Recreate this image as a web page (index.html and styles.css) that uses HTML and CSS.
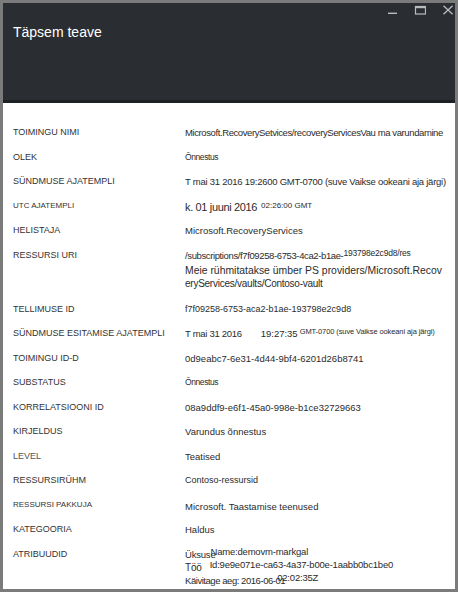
FILE: index.html
```html
<!DOCTYPE html>
<html lang="et">
<head>
<meta charset="utf-8">
<title>Täpsem teave</title>
<link rel="stylesheet" href="styles.css">
</head>
<body>
<div class="window">
  <header class="titlebar">
    <h1 class="title">Täpsem teave</h1>
    <div class="controls">
      <svg class="ctl ctl-min" width="10" height="12" viewBox="0 0 10 12"><rect x="1" y="8.6" width="9" height="1.4" fill="#b9bcbf"/></svg>
      <svg class="ctl ctl-max" width="12" height="12" viewBox="0 0 12 12"><rect x="1.5" y="2.5" width="10" height="7.5" fill="none" stroke="#b9bcbf" stroke-width="1.2"/><rect x="1" y="2" width="11" height="2.2" fill="#b9bcbf"/></svg>
      <svg class="ctl ctl-close" width="12" height="12" viewBox="0 0 12 12"><path d="M1.5 1.8 L10.6 10.2 M10.6 1.8 L1.5 10.2" stroke="#b9bcbf" stroke-width="1.3" fill="none"/></svg>
    </div>
  </header>
  <div class="details">
    <div class="row"><div class="label">TOIMINGU NIMI</div><div class="value ls-40">Microsoft.RecoverySetvices/recoveryServicesVau ma varundamine</div></div>
    <div class="row"><div class="label">OLEK</div><div class="value small-word">Õnnestus</div></div>
    <div class="row"><div class="label">SÜNDMUSE AJATEMPLI</div><div class="value ls-25">T mai 31 2016 19:2600 GMT-0700 (suve Vaikse ookeani aja järgi)</div></div>
    <div class="row"><div class="label label-small">UTC AJATEMPLI</div><div class="value value-low"><span class="big">k. 01 juuni 2016</span><span class="sup sup-utc">02:26:00 GMT</span></div></div>
    <div class="row"><div class="label">HELISTAJA</div><div class="value">Microsoft.RecoveryServices</div></div>
    <div class="row row-multi"><div class="label">RESSURSI URI</div><div class="value">
      <div class="line ls-38">/subscriptions/f7f09258-6753-4ca2-b1ae-<span class="sup sup-uri">193798e2c9d8/res</span></div>
      <div class="line line-lg">Meie rühmitatakse ümber PS providers/Microsoft.Recov</div>
      <div class="line line-md">eryServices/vaults/Contoso-vault</div>
    </div></div>
    <div class="row"><div class="label">TELLIMUSE ID</div><div class="value value-9">f7f09258-6753-aca2-b1ae-193798e2c9d8</div></div>
    <div class="row"><div class="label">SÜNDMUSE ESITAMISE AJATEMPLI</div><div class="value"><span class="ls-30">T mai 31 2016</span><span class="time">19:27:35</span><span class="sup sup-tz">GMT-0700 (suve Vaikse ookeani aja järgi)</span></div></div>
    <div class="row"><div class="label">TOIMINGU ID-D</div><div class="value">0d9eabc7-6e31-4d44-9bf4-6201d26b8741</div></div>
    <div class="row"><div class="label">SUBSTATUS</div><div class="value small-word">Õnnestus</div></div>
    <div class="row"><div class="label">KORRELATSIOONI ID</div><div class="value">08a9ddf9-e6f1-45a0-998e-b1ce32729663</div></div>
    <div class="row"><div class="label">KIRJELDUS</div><div class="value">Varundus õnnestus</div></div>
    <div class="row"><div class="label label-light">LEVEL</div><div class="value">Teatised</div></div>
    <div class="row"><div class="label">RESSURSIRÜHM</div><div class="value value-9">Contoso-ressursid</div></div>
    <div class="row"><div class="label label-small">RESSURSI PAKKUJA</div><div class="value value-low">Microsoft. Taastamise teenused</div></div>
    <div class="row"><div class="label">KATEGOORIA</div><div class="value">Haldus</div></div>
    <div class="row"><div class="label">ATRIBUUDID</div><div class="value attrs">
      <div class="line">Üksuse<span class="overlay ov-name">Name:demovm-markgal</span></div>
      <div class="line"><span class="job">Töö</span><span class="overlay ov-id">Id:9e9e071e-ca63-4a37-b00e-1aabb0bc1be0</span></div>
      <div class="line line-run">Käivitage aeg: 2016-06-01<span class="overlay ov-time">02:02:35Z</span></div>
    </div></div>
  </div>
</div>
</body>
</html>
```
FILE: styles.css
```css
* { box-sizing: border-box; }
html, body { margin: 0; padding: 0; }
body {
  font-family: "Liberation Sans", Arial, sans-serif;
  background: #7b7b7b;
}
.window {
  width: 458px;
  height: 592px;
  border: 3px solid #7b7b7b;
  background: #ffffff;
  display: flex;
  flex-direction: column;
  overflow: hidden;
}
.titlebar {
  height: 100px;
  background: #2a2e33;
  border-bottom: 3px solid #1d2024;
  display: flex;
  justify-content: space-between;
  align-items: flex-start;
  padding: 0 1px 0 10px;
  flex: none;
}
.title {
  margin: 21px 0 0 0;
  font-size: 14px;
  line-height: 16px;
  font-weight: normal;
  color: #ffffff;
}
.controls {
  display: flex;
  align-items: flex-start;
  margin-top: 1px;
}
.ctl { display: block; }
.ctl-max { margin-left: 17px; }
.ctl-close { margin-left: 16px; }

.details {
  flex: 1;
  display: flex;
  flex-direction: column;
  gap: 11.5px;
  padding: 23px 10px 0 10px;
  color: #2e2e2e;
}
.row {
  display: grid;
  grid-template-columns: 172px 1fr;
  line-height: 13px;
  white-space: nowrap;
}
.row-multi { margin-bottom: 1.5px; }
.label {
  font-size: 9px;
  color: #333333;
  height: 13px;
}
.label-small { font-size: 8px; position: relative; top: -1px; }
.label-light { color: #555555; }
.value {
  font-size: 9.5px;
  color: #2b2b2b;
}
.value-9 { font-size: 9px; }
.value-low { position: relative; top: 1px; }
.small-word { font-size: 8.5px; letter-spacing: -0.4px; }
.ls-40 { letter-spacing: -0.4px; }
.ls-38 { letter-spacing: -0.38px; }
.ls-30 { letter-spacing: -0.3px; }
.ls-25 { letter-spacing: -0.25px; }

.big { font-size: 11px; letter-spacing: -0.35px; line-height: 0; }
.sup { vertical-align: 3px; line-height: 0; }
.sup-utc { font-size: 8px; margin-left: 4px; }
.sup-uri { font-size: 8.5px; letter-spacing: -0.2px; }
.sup-tz { font-size: 7.5px; margin-left: 2px; letter-spacing: -0.1px; }
.time { margin-left: 19px; }

.line { line-height: 13px; height: 13px; }
.line-lg { font-size: 10.4px; margin-top: 2px; }
.line-md { font-size: 10px; letter-spacing: -0.25px; }

.attrs .line { letter-spacing: -0.2px; }
.attrs .line-run { font-size: 9.5px; letter-spacing: -0.45px; }
.job { font-size: 10px; line-height: 0; }
.overlay { vertical-align: 3px; line-height: 0; letter-spacing: -0.2px; font-size: 9.5px; }
.ov-name { margin-left: -5px; }
.ov-id { margin-left: 8px; }
.ov-time { margin-left: -8px; }
```
